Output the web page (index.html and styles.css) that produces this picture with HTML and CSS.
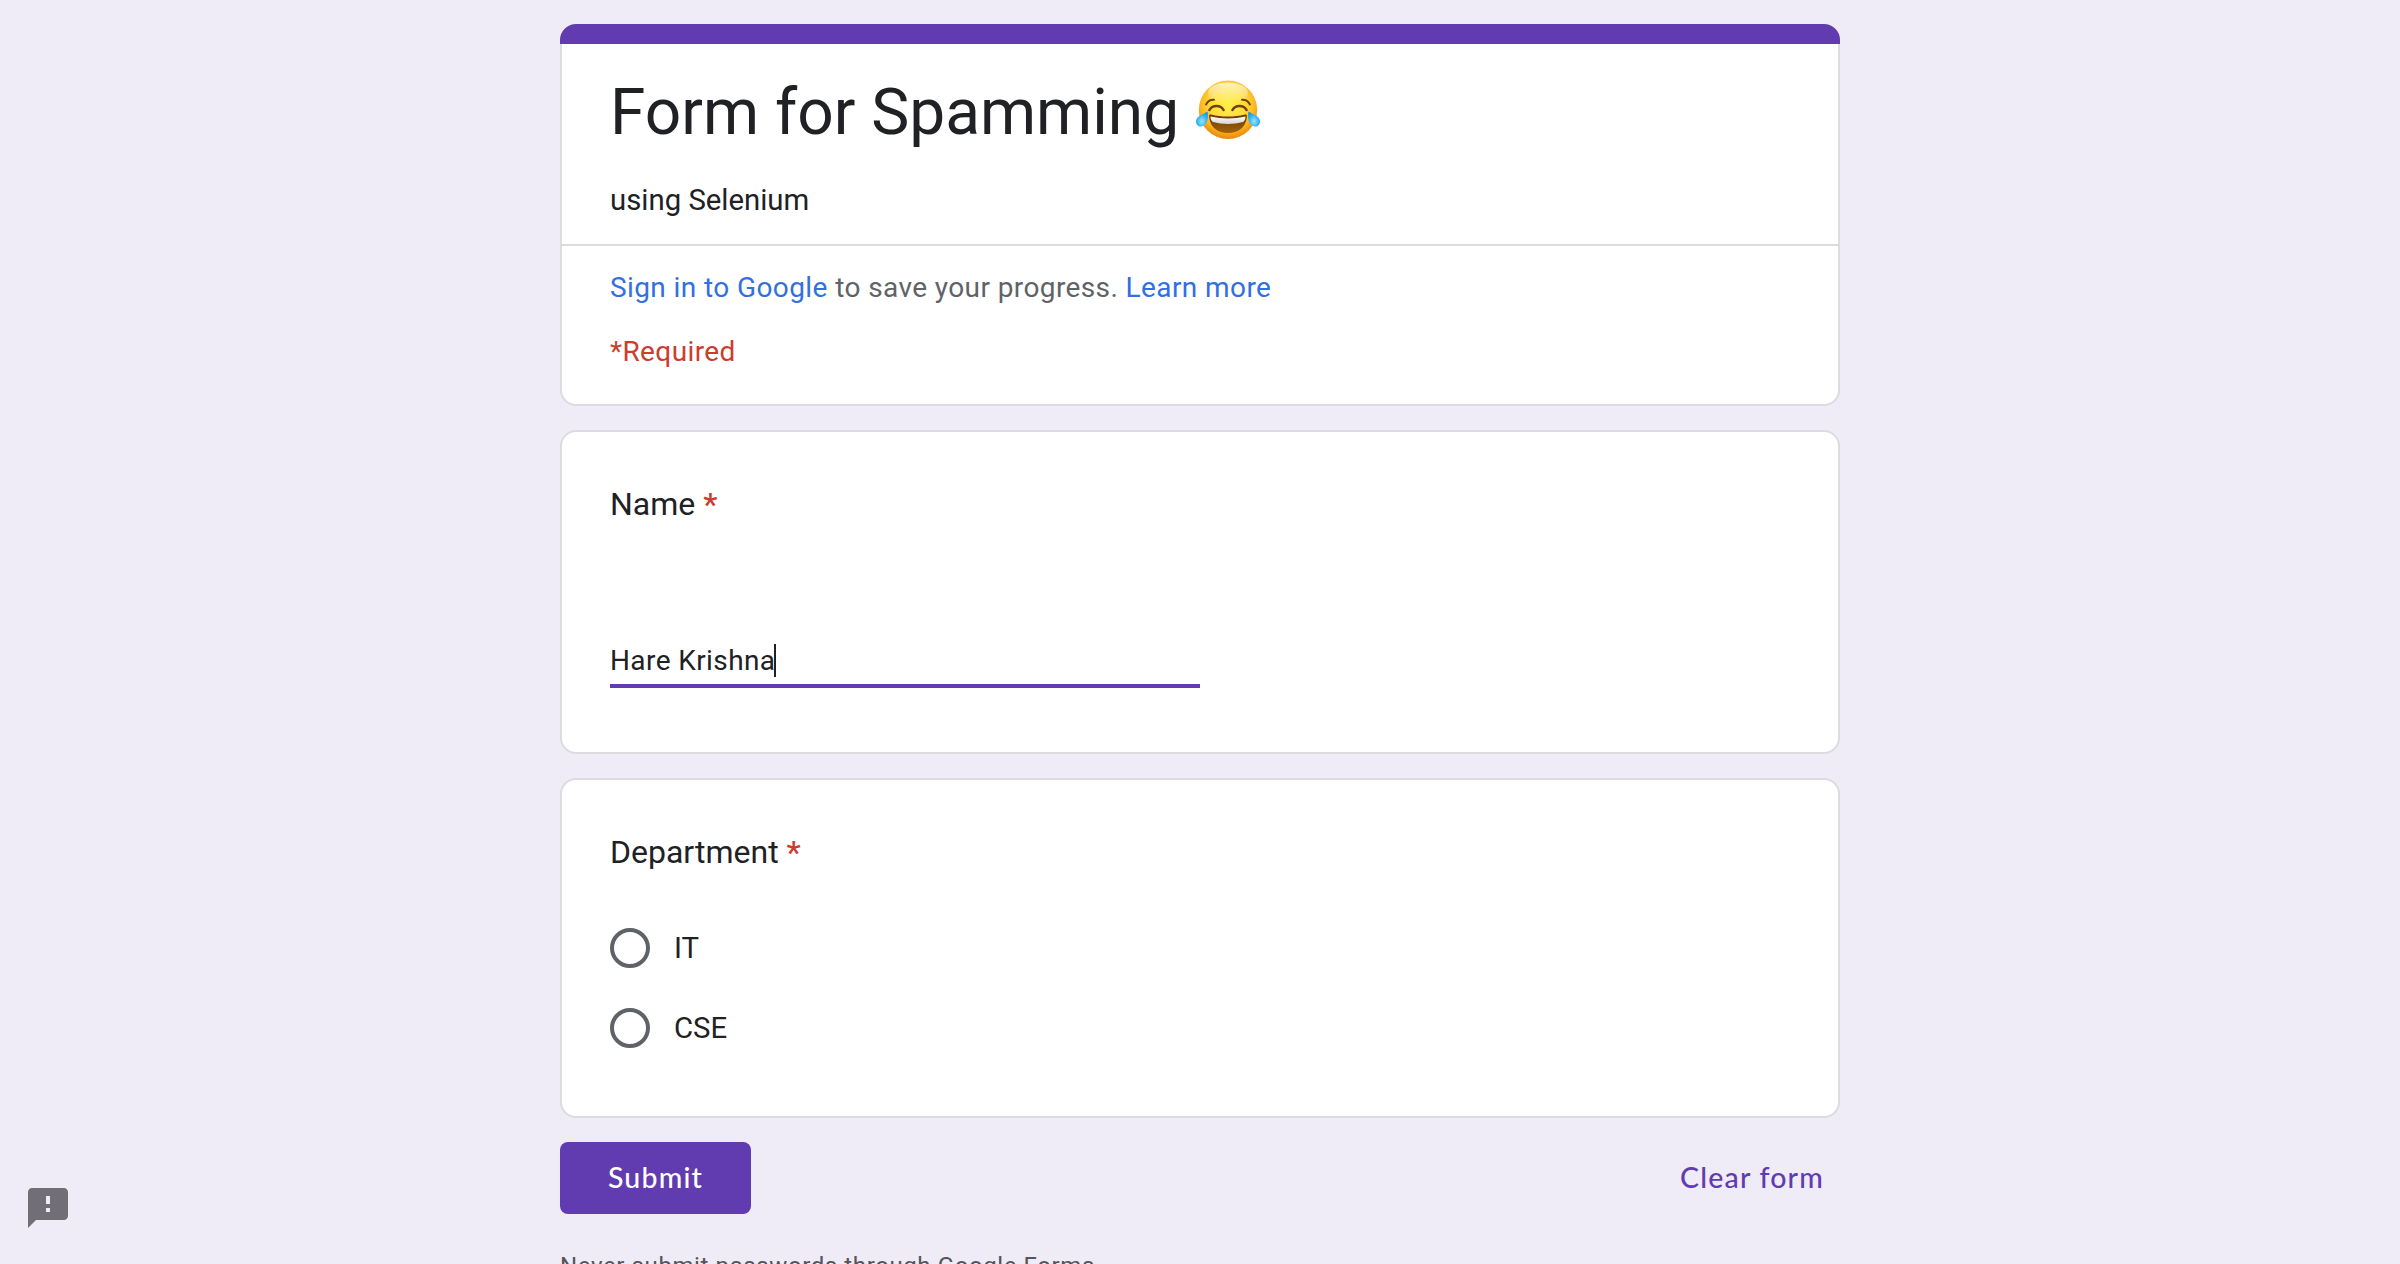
FILE: index.html
```html
<!DOCTYPE html>
<html lang="en">
<head>
<meta charset="utf-8">
<title>Form for Spamming 😂</title>
<link rel="stylesheet" href="styles.css">
</head>
<body>
<form class="form">
  <section class="card card-header">
    <div class="accent-bar"></div>
    <div class="intro">
      <h1 class="title"><span class="title-text">Form for Spamming</span>
        <svg class="emoji" viewBox="0 0 64 60" role="img" aria-label="Face with tears of joy">
          <defs>
            <radialGradient id="face" cx=".5" cy=".4" r=".6">
              <stop offset="0" stop-color="#fff04a"/>
              <stop offset=".5" stop-color="#fedc35"/>
              <stop offset=".75" stop-color="#fcba24"/>
              <stop offset="1" stop-color="#ec860a"/>
            </radialGradient>
            <linearGradient id="shine" x1="0" y1="0" x2="0" y2="1">
              <stop offset="0" stop-color="#fff" stop-opacity=".7"/>
              <stop offset="1" stop-color="#fff" stop-opacity="0"/>
            </linearGradient>
            <linearGradient id="mouth" x1="0" y1="0" x2="0" y2="1">
              <stop offset="0" stop-color="#6b3404"/>
              <stop offset="1" stop-color="#a0640a"/>
            </linearGradient>
            <linearGradient id="teeth" x1="0" y1="0" x2="0" y2="1">
              <stop offset="0" stop-color="#fff"/>
              <stop offset="1" stop-color="#d5d2d0"/>
            </linearGradient>
            <radialGradient id="tear" cx=".5" cy=".65" r=".65">
              <stop offset="0" stop-color="#9be6ff"/>
              <stop offset=".5" stop-color="#45bdf6"/>
              <stop offset="1" stop-color="#1596e4"/>
            </radialGradient>
          </defs>
          <circle cx="32" cy="29.8" r="29.2" fill="url(#face)"/>
          <ellipse cx="32" cy="13" rx="20" ry="10.500" fill="url(#shine)"/>
          <path d="M13 36C14 48 22 53 32 53s18-5 19-17c0-1.300-1-1.800-2-1.500-11 2.700-23 2.700-34 0-1-.3-2 .2-2 1.500z" fill="url(#mouth)"/>
          <path d="M14.500 36.500c0 2.500.8 4.500 2.500 5.500 9 2.500 21 2.500 30 0 1.700-1 2.500-3 2.500-5.500-11 2.500-24 2.500-35 0z" fill="url(#teeth)"/>
          <g fill="none" stroke="#71400c" stroke-linecap="round">
            <path d="M13.500 30c1.500-3 4-4 7-4s5.500 1 7 4" stroke-width="2.600"/>
            <path d="M36.500 30c1.500-3 4-4 7-4s5.500 1 7 4" stroke-width="2.600"/>
            <path d="M10 24.500c1.500-3 4.500-5 8-4.800" stroke-width="1.900"/>
            <path d="M54 24.500c-1.500-3-4.500-5-8-4.800" stroke-width="1.900"/>
          </g>
          <path d="M11.500 31.500c.8 5 .4 9-1.500 12-2.400 3.600-7 4-9 1.200-2.200-3.200-.6-7.200 3-9.200 3-1.600 5-2.300 7.500-4z" fill="url(#tear)"/>
          <path d="M52.500 31.500c-.8 5-.4 9 1.500 12 2.400 3.600 7 4 9 1.200 2.200-3.200.6-7.200-3-9.200-3-1.600-5-2.300-7.500-4z" fill="url(#tear)"/>
        </svg>
      </h1>
      <div class="description">using Selenium</div>
    </div>
    <div class="notices">
      <div class="signin"><a class="link">Sign in to Google</a> to save your progress. <a class="link">Learn more</a></div>
      <div class="required-note">*Required</div>
    </div>
  </section>

  <section class="card card-name">
    <div class="question">Name <span class="star">*</span></div>
    <div class="text-field"><span class="value">Hare Krishna</span><span class="caret"></span></div>
  </section>

  <section class="card card-department">
    <div class="question">Department <span class="star">*</span></div>
    <div class="options">
      <label class="option"><span class="radio"></span><span>IT</span></label>
      <label class="option"><span class="radio"></span><span>CSE</span></label>
    </div>
  </section>

  <div class="actions">
    <button class="submit" type="button">Submit</button>
    <a class="clear">Clear form</a>
  </div>
  <div class="footer">Never submit passwords through Google Forms.</div>
</form>

<svg class="report" viewBox="0 0 24 24" aria-label="Report a problem">
  <path d="M20 2H4c-1.100 0-2 .9-2 2v18l4-4h14c1.100 0 2-.9 2-2V4c0-1.100-.9-2-2-2zm-7 12h-2v-2h2v2zm0-4h-2V6h2v4z"/>
</svg>
</body>
</html>
```
FILE: styles.css
```css
* {
  box-sizing: border-box;
}

body {
  margin: 0;
  height: 1264px;
  overflow: hidden;
  background: #efebf7;
  color: #202124;
  font-family: Roboto, "Liberation Sans", sans-serif;
}

.form {
  display: flex;
  flex-direction: column;
  gap: 24px;
  width: 1280px;
  margin: 0 auto;
  padding-top: 24px;
}

.card {
  background: #fff;
  border: 2px solid #dadce0;
  border-radius: 16px;
}

/* header */
.card-header {
  height: 382px;
  border-top: 0;
}

.accent-bar {
  height: 20px;
  margin: 0 -2px;
  background: #613cb0;
  border-radius: 16px 16px 0 0;
}

.intro {
  height: 202px;
  padding: 29px 48px 0;
  border-bottom: 2px solid #dadce0;
}

.title {
  display: flex;
  align-items: center;
  gap: 17px;
  height: 80px;
  margin: 0 0 27px;
  font-size: 64px;
  font-weight: 400;
  line-height: 80px;
}

.emoji {
  width: 64px;
  height: 60px;
  margin-bottom: 6px;
}

.description {
  font-size: 29.33px;
  line-height: 40px;
}

.notices {
  display: flex;
  flex-direction: column;
  gap: 24px;
  padding: 22px 48px 0;
  font-size: 28px;
  line-height: 40px;
  letter-spacing: 0.4px;
}

.signin {
  color: #5f6368;
}

.link {
  color: #326fe0;
}

.required-note,
.star {
  color: #cc3d2e;
}

.star {
  font-weight: 500;
}

/* questions */
.question {
  font-size: 32px;
  line-height: 48px;
}

.card-name {
  display: flex;
  flex-direction: column;
  justify-content: space-between;
  height: 324px;
  padding: 48px 48px 64px;
}

.text-field {
  display: flex;
  align-items: center;
  width: 590px;
  height: 52px;
  border-bottom: 4px solid #613cb0;
  font-size: 28px;
  letter-spacing: 0.4px;
}

.caret {
  width: 2px;
  height: 33px;
  margin-left: -1px;
  background: #202124;
}

.card-department {
  height: 340px;
  padding: 48px 48px 0;
}

.options {
  display: flex;
  flex-direction: column;
  gap: 40px;
  margin-top: 52px;
}

.option {
  display: flex;
  align-items: center;
  gap: 24px;
  height: 40px;
  font-size: 29.33px;
}

.radio {
  width: 40px;
  height: 40px;
  border: 4px solid #5f6368;
  border-radius: 50%;
}

/* actions */
.actions {
  display: flex;
  justify-content: space-between;
  align-items: center;
  height: 72px;
  padding-right: 16px;
}

.submit,
.clear {
  font: 500 28.5px Lato, "Open Sans", sans-serif;
  letter-spacing: 1.2px;
  padding: 0 0 3px;
}

.submit {
  width: 191px;
  height: 72px;
  border: 0;
  border-radius: 8px;
  background: #613cb0;
  color: #fff;
}

.clear {
  color: #613cb0;
}

.footer {
  margin-top: 12px;
  font-size: 24px;
  line-height: 32px;
  letter-spacing: 0.6px;
  color: #55535b;
}

.report {
  position: absolute;
  left: 24px;
  top: 1184px;
  width: 48px;
  height: 48px;
  fill: #716f75;
}
```
